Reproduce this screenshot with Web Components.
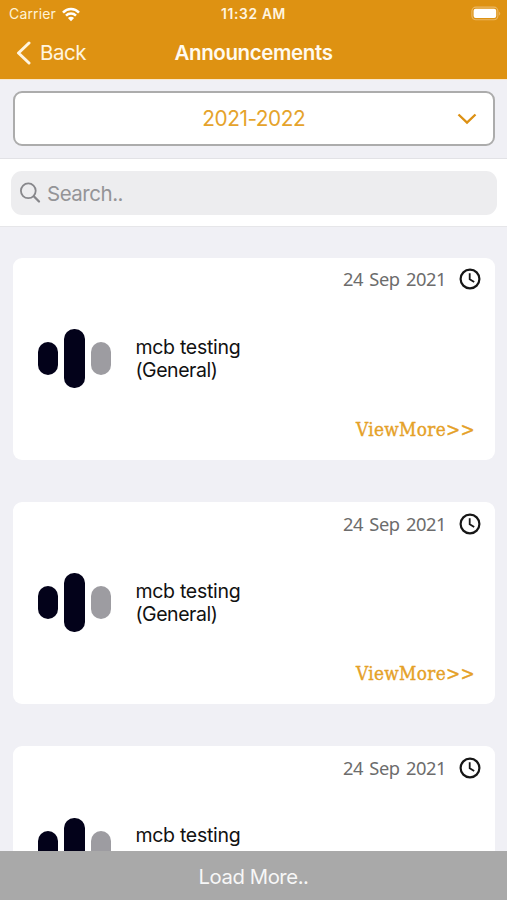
<!DOCTYPE html>
<html lang="en">
<head>
<meta charset="utf-8">
<title>Announcements</title>
<style>
html,body{margin:0;height:100%;overflow:hidden}
body{font-family:Inter,"Liberation Sans",sans-serif;background:#f0f0f5}
</style>
</head>
<body>
<announcements-app></announcements-app>
<script>
const define = (name, html, setup) => customElements.define(name, class extends HTMLElement {
  connectedCallback() {
    if (this.shadowRoot) return;
    this.attachShadow({ mode: 'open' }).innerHTML = html;
    if (setup) setup(this);
  }
});

// Text tracked so that its line takes exactly the given width.
define('fit-text', `<style>:host{display:block;flex:none;white-space:nowrap}span{display:inline-block}</style><span><slot></slot></span>`, el => {
  const span = el.shadowRoot.querySelector('span');
  const target = +el.getAttribute('width');
  const slot = span.querySelector('slot');
  const length = slot.assignedNodes({ flatten: true }).reduce((n, node) => n + node.textContent.length, 0);
  span.style.letterSpacing = (target - span.getBoundingClientRect().width) / length + 'px';
  el.style.width = target + 'px';
});

define('status-bar', `<style>
:host{display:grid;grid-template-columns:1fr auto 1fr;height:27px;line-height:28px;font-size:14px;color:#fff3d6}
.l,.r{display:flex;align-items:center}.l{padding-left:9px;gap:6px}.r{justify-content:flex-end;padding-right:6px}
.t{font-weight:600;font-size:13.8px;color:#fff5e0}svg{display:block}
</style>
<div class="l"><fit-text width="47">Carrier</fit-text>
<svg width="18" height="15" viewBox="0 0 18 15" fill="none" stroke="#fff" stroke-width="2.5"><path d="M1 5.6C5.5.9 12.5.9 17 5.6M4 8.7c2.8-2.8 7.2-2.8 10 0"/><path d="M9 14.2 5.9 11c1.7-1.7 4.5-1.7 6.2 0z" fill="#fff" stroke="none"/></svg></div>
<fit-text class="t" width="65">11:32 AM</fit-text>
<div class="r"><svg width="30" height="16" viewBox="0 0 30 16"><rect x=".9" y="1.1" width="26" height="12.6" rx="4" fill="none" stroke="#eab865" stroke-width="1.1"/><rect x="2.6" y="2.7" width="22.6" height="9.4" rx="2" fill="#fff"/><path d="M28.1 5.7c1.5.7 1.5 3.1 0 3.7z" fill="#eab865"/></svg></div>`);

define('nav-bar', `<style>
:host{display:grid;grid-template-columns:1fr auto 1fr;height:52px;line-height:52px;font-size:20.5px;color:#fff5e0}
.l{display:flex;align-items:center;height:51px;line-height:51px;padding-left:16px;gap:9px}
.t{font-weight:600;font-size:20.5px;color:#fffaf0}svg{display:block}
</style>
<div class="l"><svg width="15" height="24" viewBox="0 0 15 24" fill="none" stroke="#fff5e0" stroke-width="3" stroke-linecap="round" stroke-linejoin="round"><path d="M13 2 2.5 12 13 22"/></svg><fit-text width="46">Back</fit-text></div>
<fit-text class="t" width="158">Announcements</fit-text><div></div>`);

define('year-select', `<style>
:host{display:block;padding:11px 12.5px 12px 13px;border-bottom:1px solid #e2e2e6;border-top:1px solid #f9e8cd}
.b{box-sizing:border-box;height:55px;border:2px solid #acacac;border-radius:9px;background:#fff;display:grid;grid-template-columns:1fr auto 1fr;align-items:center;font-size:20.8px;line-height:52px;color:#e5a32b}
svg{display:block;grid-column:3;justify-self:end;margin-right:16px}fit-text{grid-column:2}
</style><div class="b"><fit-text width="103"><slot></slot></fit-text>
<svg width="20" height="12" viewBox="0 0 20 12" fill="none" stroke="#dc9013" stroke-width="2.3"><path d="m1.5 1.5 8.5 8.2 8.5-8.2"/></svg></div>`);

define('search-field', `<style>
:host{display:block;background:#fff;padding:12px 10px 11px 11px;border-bottom:1px solid #e6e6e9}
.b{height:43.5px;border-radius:11px;background:#ededef;display:flex;align-items:center;padding-left:9px;gap:6px;font-size:20.5px;color:#949497}svg{display:block}fit-text{line-height:44px;padding-top:1.5px}
</style><div class="b"><svg width="21" height="22" viewBox="0 0 21 22" fill="none" stroke="#87878b" stroke-width="1.8" stroke-linecap="round"><circle cx="8.3" cy="8.8" r="7.4"/><path d="m13.8 14.3 5.2 5.2" stroke-width="2.3"/></svg><fit-text width="76">Search..</fit-text></div>`);

define('mcb-logo', `<style>:host{display:flex;align-items:center;gap:6.7px;height:60px}
i{width:20.2px;height:33px;border-radius:10.1px;background:#03021a}.m{height:59px}.g{background:#9d9ca1}</style><i></i><i class="m"></i><i class="g"></i>`);

define('announcement-card', `<style>
:host{display:flex;flex-direction:column;flex:none;box-sizing:border-box;height:202.3px;background:#fff;border-radius:9px}
.d{display:flex;justify-content:flex-end;align-items:center;gap:13px;height:43.5px;padding-right:14px;font:18.3px/44px "Noto Sans",sans-serif;word-spacing:2px;color:#6c6c6c}
.m{display:flex;align-items:center;height:115px;padding-left:25px;gap:24px;font-size:19.5px;line-height:23.4px;color:#111}
.n{height:46.8px;padding-top:1px}
.v{align-self:flex-end;margin-right:20px;font:500 18.8px/27px "DejaVu Serif Condensed","DejaVu Serif",serif;font-stretch:condensed;color:#e5a128;-webkit-text-stroke:.35px #e5a128}svg{display:block}
</style>
<div class="d"><fit-text width="103">24 Sep 2021</fit-text><svg width="22" height="22" viewBox="0 0 22 22" fill="none" stroke="#161616" stroke-width="2.2"><circle cx="11" cy="11" r="9.4"/><path d="M10.7 5.3v6l4.5 2.8" stroke-width="1.8"/></svg></div>
<div class="m"><mcb-logo></mcb-logo><div class="n"><fit-text width="105">mcb testing</fit-text></div></div>`, el => {
  // A card peeking above the footer carries only its first lines.
  if (el.hasAttribute('peek')) return;
  el.shadowRoot.querySelector('.n').insertAdjacentHTML('beforeend', '<fit-text width="82">(General)</fit-text>');
  el.shadowRoot.querySelector('.m').insertAdjacentHTML('afterend', '<fit-text class="v" width="119">ViewMore&gt;&gt;</fit-text>');
});

define('load-more', `<style>
:host{display:flex;flex:none;justify-content:center;height:49px;line-height:51px;font-size:20.3px;background:#a9a9a9;color:#f7f7f7}
</style><fit-text width="110">Load More..</fit-text>`);

define('announcements-app', `<style>
:host{display:flex;flex-direction:column;height:900px;width:507px;overflow:hidden}
header{background:#de9212;flex:none}
main{flex:1;min-height:0;overflow:hidden;display:flex;flex-direction:column;gap:42px;padding:31.1px 12px 0 12.5px}
</style>
<header><status-bar></status-bar><nav-bar></nav-bar></header>
<year-select>2021-2022</year-select><search-field></search-field>
<main><announcement-card></announcement-card><announcement-card></announcement-card><announcement-card peek></announcement-card></main>
<load-more></load-more>`);
</script>
</body>
</html>
